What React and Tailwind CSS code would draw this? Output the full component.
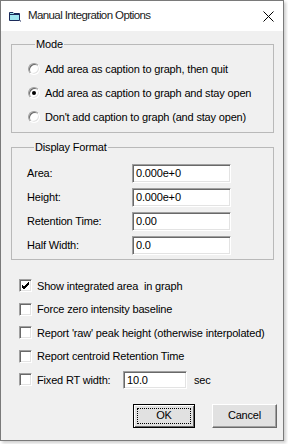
import React from 'react';

const ui = { fontFamily: '"Liberation Sans", Arial, sans-serif' };

function Radio({ checked, label }) {
  return (
    <div className="h-[24px] flex items-center">
      <span className="w-[12px] h-[12px] rounded-full bg-white border border-t-[#a0a0a0] border-l-[#a0a0a0] border-b-[#ffffff] border-r-[#ffffff] shadow-[inset_1px_1px_0_#696969,inset_-1px_-1px_0_#e3e3e3] flex items-center justify-center">
        {checked ? <span className="w-[4px] h-[4px] rounded-full bg-black" /> : null}
      </span>
      <span className="ml-[5px] text-[11px] text-black">{label}</span>
    </div>
  );
}

function Check({ checked, children }) {
  return (
    <div className="h-[23.5px] flex items-center">
      <span className="w-[13px] h-[13px] bg-white border border-t-[#a0a0a0] border-l-[#a0a0a0] border-b-[#ffffff] border-r-[#ffffff] shadow-[inset_1px_1px_0_#696969,inset_-1px_-1px_0_#e3e3e3] flex items-center justify-center">
        {checked ? (
          <svg width="9" height="9" viewBox="0 0 9 9">
            <path d="M1 4 L3 6 L8 1 M1 5 L3 7 L8 2 M1 6 L3 8 L8 3" stroke="#000" strokeWidth="1" fill="none" />
          </svg>
        ) : null}
      </span>
      {children}
    </div>
  );
}

function Field({ value, className }) {
  return (
    <div className={`bg-white border border-t-[#a0a0a0] border-l-[#a0a0a0] border-b-[#ffffff] border-r-[#ffffff] shadow-[inset_1px_1px_0_#696969,inset_-1px_-1px_0_#e3e3e3] flex items-center pl-[3px] text-[11px] text-black ${className}`}>
      {value}
    </div>
  );
}

export default function App() {
  const rows = [
    ['Area:', '0.000e+0'],
    ['Height:', '0.000e+0'],
    ['Retention Time:', '0.00'],
    ['Half Width:', '0.0'],
  ];
  return (
    <div className="w-[288px] h-[444px] bg-white tracking-[-0.17px]" style={ui}>
      <div className="w-[284px] h-[441px] border border-[#7a7a7a] bg-[#f0f0f0] shadow-[2px_2px_3px_rgba(0,0,0,0.2)] flex flex-col">
        <div className="h-[30px] bg-white flex items-center pl-[7px] pr-[9px] shrink-0">
          <svg width="14" height="12" viewBox="0 0 14 12">
            <path d="M1.5 2.5 H5 L6 3.5 H11.5 V10.5 H1.5 Z" fill="#9fe6f0" stroke="#1b2a5a" />
            <path d="M1.5 4.5 H11.5" stroke="#1b2a5a" />
            <path d="M12 11 H13" stroke="#1b2a5a" />
          </svg>
          <span className="ml-[6px] text-[11.5px] tracking-[-0.6px] text-[#1a1a1a]">
            Manual Integration Options
          </span>
          <svg className="ml-auto" width="11" height="11" viewBox="0 0 11 11">
            <path d="M0.5 0.5 L10.5 10.5 M10.5 0.5 L0.5 10.5" stroke="#000" strokeWidth="1" />
          </svg>
        </div>

        <div className="pl-[10px] pr-[9px] pt-[7px]">
          <fieldset className="border border-[#b9b9b9] pl-[16px] pt-[6px] pb-[3px]">
            <legend className="ml-[7px] px-[1px] text-[11px] leading-[13px] text-black">Mode</legend>
            <Radio label="Add area as caption to graph, then quit" />
            <Radio checked label="Add area as caption to graph and stay open" />
            <Radio label="Don't add caption to graph (and stay open)" />
          </fieldset>

          <fieldset className="mt-[8px] border border-[#b9b9b9] pl-[15px] pt-[7px] pb-[2px]">
            <legend className="ml-[7px] px-[1px] text-[11px] leading-[13px] text-black">Display Format</legend>
            {rows.map(([label, value]) => (
              <div key={label} className="h-[24px] flex items-center">
                <span className="w-[105px] text-[11px] text-black">{label}</span>
                <Field value={value} className="w-[99px] h-[19px]" />
              </div>
            ))}
          </fieldset>
        </div>

        <div className="pl-[18px] mt-[14px]">
          <Check checked>
            <span className="ml-[5px] text-[11px] text-black">Show integrated area&nbsp; in graph</span>
          </Check>
          <Check>
            <span className="ml-[5px] text-[11px] text-black">Force zero intensity baseline</span>
          </Check>
          <Check>
            <span className="ml-[5px] text-[11px] text-black">Report 'raw' peak height (otherwise interpolated)</span>
          </Check>
          <Check>
            <span className="ml-[5px] text-[11px] text-black">Report centroid Retention Time</span>
          </Check>
          <Check>
            <span className="ml-[5px] w-[86px] text-[11px] text-black">Fixed RT width:</span>
            <Field value="10.0" className="w-[64px] h-[18px]" />
            <span className="ml-[7px] text-[11px] text-black">sec</span>
          </Check>
        </div>

        <div className="flex justify-end gap-[17px] pr-[6px] mt-[12px]">
          <button className="w-[62px] h-[24px] bg-[#e1e1e1] border border-black shadow-[inset_1px_1px_0_#ffffff,inset_-1px_-1px_0_#696969] flex items-center justify-center text-[11px] text-black">
            <span className="w-[54px] h-[16px] border border-dotted border-black flex items-center justify-center">OK</span>
          </button>
          <button className="w-[65px] h-[24px] bg-[#e1e1e1] border border-t-[#ffffff] border-l-[#ffffff] border-b-[#696969] border-r-[#696969] shadow-[inset_-1px_-1px_0_#a0a0a0] flex items-center justify-center text-[11px] text-black">
            Cancel
          </button>
        </div>
      </div>
    </div>
  );
}
